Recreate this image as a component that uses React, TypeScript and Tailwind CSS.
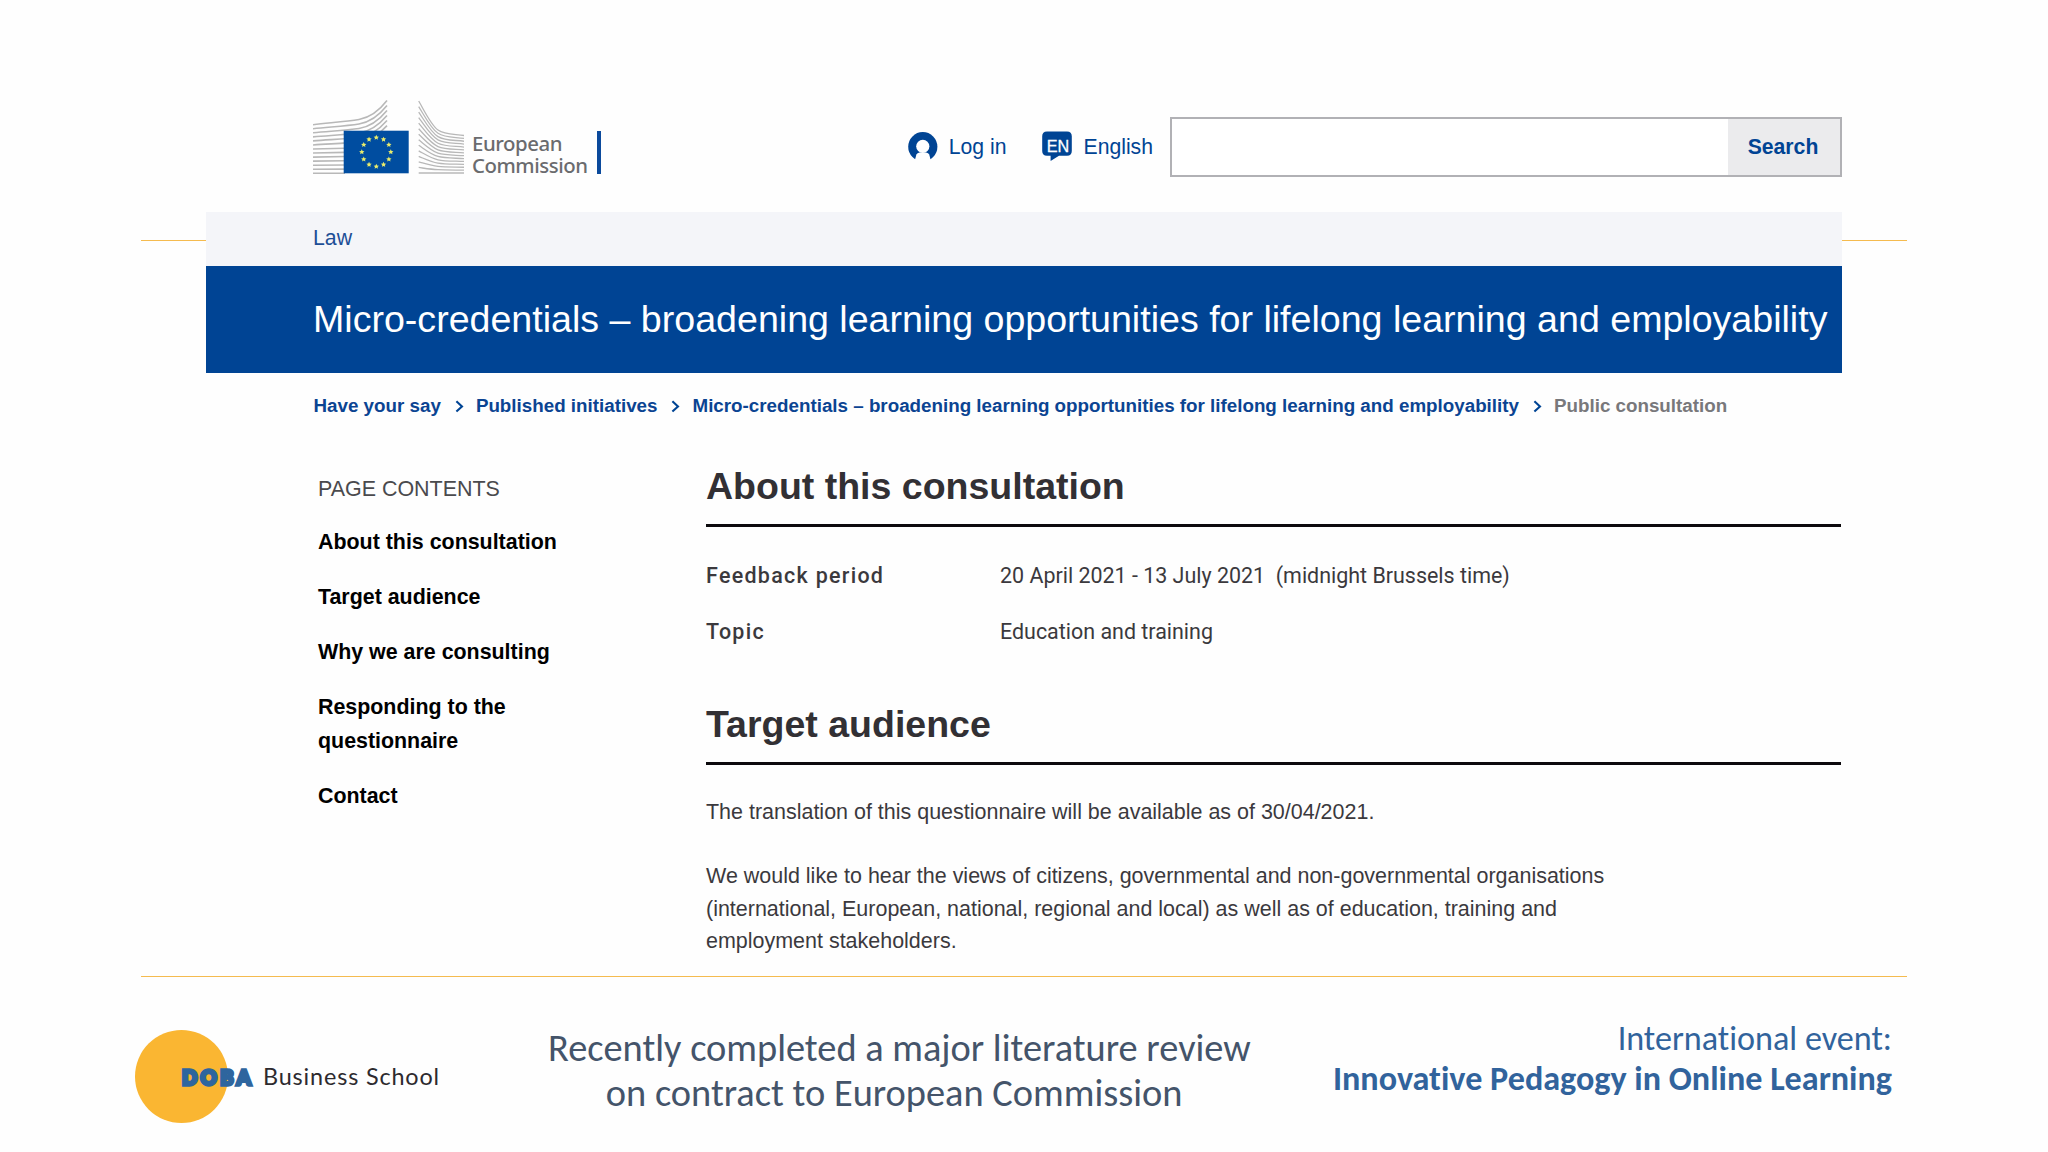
import React from "react";

const NAV_ITEMS = [
	"About this consultation",
	"Target audience",
	"Why we are consulting",
	"Responding to the questionnaire",
	"Contact",
];

const BREADCRUMBS = [
	"Have your say",
	"Published initiatives",
	"Micro-credentials – broadening learning opportunities for lifelong learning and employability",
];

const FACTS = [
	{ label: "Feedback period", value: "20 April 2021 - 13 July 2021  (midnight Brussels time)" },
	{ label: "Topic", value: "Education and training" },
];

const LEFT_LINES = Array.from({ length: 13 }, (_, i) => i);
const RIGHT_LINES = Array.from({ length: 14 }, (_, i) => i / 13);
const STARS = Array.from({ length: 12 }, (_, i) => (i * Math.PI) / 6);

function starPoints(cx: number, cy: number, r: number) {
	return Array.from({ length: 10 }, (_, i) => {
		const radius = i % 2 ? r * 0.48 : r;
		const angle = (i * Math.PI) / 5 - Math.PI / 2;
		return `${(cx + radius * Math.cos(angle)).toFixed(2)},${(cy + radius * Math.sin(angle)).toFixed(2)}`;
	}).join(" ");
}

function CommissionEmblem() {
	const down = (y: number, t: number) => (y + (73 - y) * t).toFixed(2);
	return (
		<svg width="151" height="74" viewBox="0 0 151 74" fill="none" className="flex-none">
			<g stroke="#b8b8b8" strokeWidth="1.6">
				{LEFT_LINES.map(i => {
					const y = 24.7 + i * 4.05;
					const flat = Math.max(0, 1 - i / 12);
					return i < 6
						? <path key={i} d={`M0 ${y}C20 ${y - 2.2 * flat} 34 ${y - 3.2 * flat} 46 ${y - 5.2 * flat}S66 ${11 + i * 4.7} 74 ${0.6 + i * 5}`} />
						: <path key={i} d={`M0 ${y}L32 ${y - 1.6 * flat}`} />;
				})}
				{RIGHT_LINES.map(t => (
					<path key={t} strokeWidth="1.3" d={`M105.7 ${down(1, t)}C112 ${down(12, t)} 118 ${down(25, t)} 125 ${down(30, t)}S142 ${down(34, t)} 151 ${down(35.5, t)}`} />
				))}
			</g>
			<rect x="30.7" y="30.7" width="65" height="42.6" fill="#004da0" />
			{STARS.map(a => (
				<polygon key={a} fill="#e9ec6c" points={starPoints(63.3 + 14.5 * Math.sin(a), 52 - 14.5 * Math.cos(a), 2.8)} />
			))}
		</svg>
	);
}

function UserIcon() {
	return (
		<svg width="30" height="28" viewBox="0 0 30 28" className="flex-none">
			<circle cx="14.8" cy="14.7" r="14.6" fill="#004494" />
			<circle cx="14.8" cy="14.3" r="6.6" fill="#fff" />
			<path d="M6.8 28.5L8.4 22.6Q9.2 20.6 11.4 20.4L18.2 20.4Q20.4 20.6 21.2 22.6L22.8 28.5Z" fill="#fff" />
		</svg>
	);
}

function LanguageIcon() {
	return (
		<svg width="30" height="30" viewBox="0 0 30 30" className="flex-none">
			<path d="M5 .5H25Q29.8 .5 29.8 5.3V20Q29.8 24.8 25 24.8H17L8.6 30V24.8H5Q.2 24.8 .2 20V5.3Q.2 .5 5 .5Z" fill="#004494" />
			<text x="15.9" y="20.8" textAnchor="middle" textLength="22.5" lengthAdjust="spacingAndGlyphs" fill="#fff" stroke="#fff" strokeWidth=".3" className="font-['Liberation_Sans'] text-[17px]">EN</text>
		</svg>
	);
}

function Chevron() {
	return (
		<svg width="9" height="13" viewBox="0 0 9 13" fill="none" className="ml-[14px] mr-[12px] flex-none">
			<path d="M1.4 1.2L7 6.4L1.4 11.6" stroke="#004494" strokeWidth="2.1" />
		</svg>
	);
}

function SectionTitle({ children }: { children: React.ReactNode }) {
	return (
		<h2 className="border-b-3 border-[#0c0a0d] pb-[14px] text-[37.5px] leading-[48px] font-bold text-[#323034]">{children}</h2>
	);
}

function Header() {
	return (
		<header className="flex h-[212px] items-start pl-[107px] text-[21.2px] text-[#004494]">
			<div className="mt-[100px] flex items-end">
				<CommissionEmblem />
				<p className="-mb-[2px] ml-[8px] w-[125px] font-['Noto_Sans'] text-[20.4px] leading-[22px] font-medium tracking-[-0.45px] text-[#6a6b6e]">European Commission</p>
				<div className="h-[43px] w-[4px] bg-[#0b4a9c]" />
			</div>
			<div className="mt-[117px] ml-auto flex h-[60px] items-center">
				<div className="-mt-[2px]"><UserIcon /></div>
				<span className="ml-[11px]">Log in</span>
				<div className="-mt-[2px] ml-[35px]"><LanguageIcon /></div>
				<span className="mr-[17px] ml-[12px]">English</span>
				<div className="flex h-[60px] w-[672px] border-2 border-[#b1b1b5] bg-white">
					<div className="grow" />
					<button type="button" className="w-[112px] bg-[#ebebed] pr-[2px] font-bold">Search</button>
				</div>
			</div>
		</header>
	);
}

function Footer() {
	return (
		<footer className="flex h-[175px] items-start pl-[135px]">
			<div className="mt-[53px] flex w-[413px] items-center">
				<div className="size-[93px] flex-none rounded-full bg-[#fab632]" />
				<span className="-ml-[46px] w-[81px] flex-none font-[Lato] text-[20px] font-black tracking-[3.4px] text-[#2e659e] [-webkit-text-stroke:3.4px_#2e659e]">DOBA</span>
				<span className="whitespace-nowrap font-[Lato] text-[23.4px] tracking-[0.85px] text-[#2d2a2e]">Business School</span>
			</div>
			<p className="mt-[49px] w-[701px] text-center font-[Carlito,Lato,sans-serif] text-[38.4px] leading-[44.7px] whitespace-nowrap text-[#44546a] [font-variant-ligatures:none]">
				Recently completed a major literature review<br />on contract to European Commission&nbsp;
			</p>
			<p className="mt-[41px] mr-[156px] ml-auto text-right font-[Carlito,Lato,sans-serif] text-[34.15px] leading-[40.3px] whitespace-nowrap text-[#31639c] [font-variant-ligatures:none]">
				International event:<br /><b>Innovative Pedagogy in Online Learning</b>
			</p>
		</footer>
	);
}

export default function App() {
	return (
		<div className="h-[1152px] w-[2048px] overflow-hidden bg-[#fefefe] font-['Liberation_Sans',Arial,sans-serif]">
			<div className="mx-[206px] w-[1636px]">
				<Header />
			</div>

			<div className="flex px-[141px]">
				<div className="mt-[28px] h-px w-[65px] bg-[#f5bb4f]" />
				<div className="flex h-[54px] w-[1636px] items-center bg-[#f4f5f9] pl-[107px] text-[21.3px] text-[#1d4e96]">Law</div>
				<div className="mt-[28px] h-px w-[65px] bg-[#f5bb4f]" />
			</div>

			<div className="mx-[206px] h-[710px] w-[1636px]">
				<h1 className="flex h-[107px] items-center bg-[#004494] pb-px pl-[107px] text-[37.6px] whitespace-nowrap text-white">
					Micro-credentials – broadening learning opportunities for lifelong learning and employability
				</h1>

				<nav className="mt-[19px] flex h-[28px] items-center pl-[107.5px] text-[18.79px] font-bold whitespace-nowrap text-[#0b4492]">
					{BREADCRUMBS.map(crumb => (
						<React.Fragment key={crumb}>
							<a>{crumb}</a>
							<Chevron />
						</React.Fragment>
					))}
					<span className="text-[#78787b]">Public consultation</span>
				</nav>

				<div className="mt-[42px] flex">
					<aside className="w-[500px] pt-[11px] pl-[112px]">
						<p className="text-[21.45px] leading-[33.4px] text-[#4a4a4d]">PAGE CONTENTS</p>
						<ul className="mt-[20px] flex w-[250px] flex-col gap-[21.5px] text-[21.4px] leading-[33.5px] font-bold text-black">
							{NAV_ITEMS.map(item => <li key={item}>{item}</li>)}
						</ul>
					</aside>

					<main className="w-[1135px]">
						<SectionTitle>About this consultation</SectionTitle>
						<dl className="mt-[33px] flex flex-col gap-[24.3px] font-[Roboto] text-[21.45px] leading-[32px] text-[#3b393d]">
							{FACTS.map(fact => (
								<div key={fact.label} className="flex">
									<dt className="w-[294px] font-medium tracking-[1.3px]">{fact.label}</dt>
									<dd className="whitespace-pre">{fact.value}</dd>
								</div>
							))}
						</dl>

						<div className="mt-[52px]">
							<SectionTitle>Target audience</SectionTitle>
						</div>
						<div className="mt-[31px] flex w-[920px] flex-col gap-[32.1px] text-[21.47px] leading-[32.1px] text-[#3b393d]">
							<p>The translation of this questionnaire will be available as of 30/04/2021.</p>
							<p>We would like to hear the views of citizens, governmental and non-governmental organisations (international, European, national, regional and local) as well as of education, training and employment stakeholders.</p>
						</div>
					</main>
				</div>
			</div>

			<div className="mx-[141px] h-px bg-[#f5bb4f]" />
			<Footer />
		</div>
	);
}
